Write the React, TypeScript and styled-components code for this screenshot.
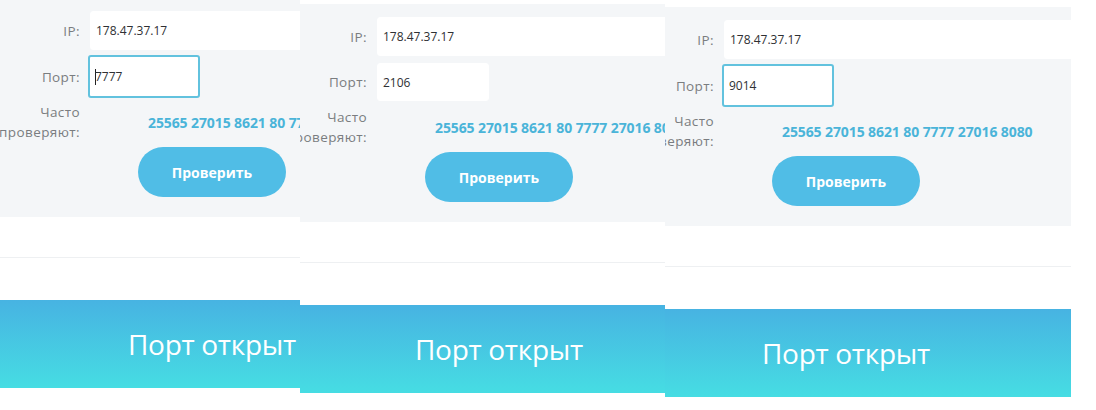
import React from 'react';
import styled, { createGlobalStyle } from 'styled-components';

const GlobalStyle = createGlobalStyle`
  html, body {
    margin: 0;
    padding: 0;
    background: #ffffff;
    overflow: hidden;
  }
  body {
    font-family: 'Open Sans', 'Liberation Sans', sans-serif;
  }
`;

const Collage = styled.div`
  display: flex;
  align-items: flex-start;
  width: 1096px;
  height: 410px;
  overflow: hidden;
`;

const Shot = styled.div<{ width: number; top: number }>`
  flex: 0 0 ${({ width }) => width}px;
  width: ${({ width }) => width}px;
  margin-top: ${({ top }) => top}px;
  overflow: hidden;
`;

const Widget = styled.div<{ shift: number }>`
  width: 520px;
  margin-left: ${({ shift }) => shift}px;
`;

const Form = styled.div`
  background: #f4f6f8;
  padding: 13px 0 20px;
  display: flex;
  flex-direction: column;
`;

const Row = styled.div<{ mt?: number }>`
  display: grid;
  grid-template-columns: 80px 1fr;
  column-gap: 10px;
  align-items: center;
  margin-top: ${({ mt = 0 }) => mt}px;
`;

const Label = styled.div`
  display: flex;
  flex-direction: column;
  align-items: flex-end;
  color: #7a7d80;
  font-size: 13.5px;
  letter-spacing: 0.4px;
  line-height: 20px;
  white-space: nowrap;
`;

const Field = styled.div<{ width: number; height: number; focused?: boolean }>`
  box-sizing: border-box;
  width: ${({ width }) => width}px;
  height: ${({ height }) => height}px;
  background: #ffffff;
  border-radius: 3px;
  display: flex;
  align-items: center;
  padding-left: 5px;
  color: #2e3033;
  font-size: 12px;
  border: ${({ focused }) => (focused ? '2px solid #62c2de' : '1px solid #ffffff')};
  ${({ focused }) => (focused ? 'margin: -2px 0 -2px -2px; height: 43px;' : '')}
`;

const Caret = styled.span`
  display: inline-block;
  width: 1px;
  height: 16px;
  background: #222;
  margin-right: -1px;
`;

const Popular = styled.div`
  margin-left: 58px;
  color: #4ab4d9;
  font-weight: 700;
  font-size: 14px;
  letter-spacing: -0.1px;
  white-space: nowrap;
`;

const Button = styled.div`
  margin: 5px 0 0 138px;
  width: 148px;
  height: 50px;
  border-radius: 25px;
  background: #50bde6;
  color: #ffffff;
  font-weight: 700;
  font-size: 14px;
  display: flex;
  align-items: center;
  justify-content: center;
`;

const Gap = styled.div`
  height: 83px;
  display: flex;
  flex-direction: column;
`;

const Divider = styled.div`
  margin-top: 40px;
  height: 1px;
  background: #eef0f2;
`;

const Result = styled.div`
  height: 88px;
  background: linear-gradient(180deg, #47b3e2 0%, #46dde3 100%);
  display: flex;
  align-items: center;
  padding-left: 128px;
  color: #ffffff;
  font-size: 28px;
  font-weight: 500;
  letter-spacing: -0.3px;
  white-space: nowrap;
`;

type ShotData = {
  width: number;
  top: number;
  shift: number;
  port: string;
  focused: boolean;
  caret?: boolean;
};

const shots: ShotData[] = [
  { width: 300, top: -2, shift: 0, port: '7777', focused: true, caret: true },
  { width: 365, top: 4, shift: -13, port: '2106', focused: false },
  { width: 406, top: 7, shift: -31, port: '9014', focused: true },
];

function PortChecker({ port, focused, caret }: ShotData) {
  return (
    <>
      <Form>
        <Row>
          <Label>IP:</Label>
          <Field width={420} height={39}>178.47.37.17</Field>
        </Row>
        <Row mt={7}>
          <Label>Порт:</Label>
          <Field width={112} height={38} focused={focused}>
            {caret && <Caret />}
            {port}
          </Field>
        </Row>
        <Row mt={6}>
          <Label>
            <span>Часто</span>
            <span>проверяют:</span>
          </Label>
          <Popular>25565 27015 8621 80 7777 27016 8080</Popular>
        </Row>
        <Button>Проверить</Button>
      </Form>
      <Gap>
        <Divider />
      </Gap>
      <Result>Порт открыт</Result>
    </>
  );
}

export default function App() {
  return (
    <>
      <GlobalStyle />
      <Collage>
        {shots.map((s, i) => (
          <Shot key={i} width={s.width} top={s.top}>
            <Widget shift={s.shift}>
              <PortChecker {...s} />
            </Widget>
          </Shot>
        ))}
      </Collage>
    </>
  );
}
